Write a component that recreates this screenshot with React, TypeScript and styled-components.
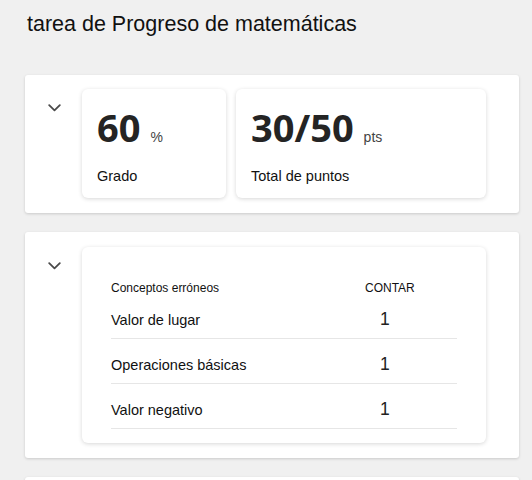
import React from "react";
import styled, { createGlobalStyle } from "styled-components";

const GlobalStyle = createGlobalStyle`
  *, *::before, *::after {
    box-sizing: border-box;
  }
  html, body {
    margin: 0;
    padding: 0;
    background: #f0f0f0;
  }
  body {
    font-family: "Liberation Sans", Arial, sans-serif;
    color: #1b1b1b;
  }
`;

const Page = styled.div`
  padding: 12px 13px 0 25px;
  display: flex;
  flex-direction: column;
`;

const Title = styled.h1`
  margin: 0 0 38px 2px;
  font-size: 21.5px;
  font-weight: 400;
  line-height: normal;
  color: #111;
`;

const Stack = styled.div`
  display: flex;
  flex-direction: column;
  gap: 19px;
`;

const Card = styled.section<{ $pt?: number }>`
  background: #fff;
  border-radius: 3px;
  box-shadow: 0 1px 3px rgba(0, 0, 0, 0.16);
  display: flex;
  align-items: flex-start;
  gap: 16px;
  padding: ${(p) => p.$pt ?? 15}px 33px 15px 17px;
`;

const Toggle = styled.button`
  flex: 0 0 24px;
  width: 24px;
  height: 24px;
  margin-top: 7px;
  padding: 0;
  border: 0;
  background: transparent;
  display: flex;
  align-items: center;
  justify-content: center;
  cursor: pointer;
`;

const Content = styled.div<{ $minH?: number }>`
  flex: 1;
  min-width: 0;
  min-height: ${(p) => p.$minH ?? 0}px;
`;

const StatRow = styled.div`
  display: flex;
  gap: 10px;
`;

const StatCard = styled.div<{ $w?: number }>`
  flex: ${(p) => (p.$w ? `0 0 ${p.$w}px` : "1")};
  background: #fff;
  border-radius: 6px;
  box-shadow: 0 1px 4px rgba(0, 0, 0, 0.16);
  padding: 19px 15px 14px 15px;
  display: flex;
  flex-direction: column;
  gap: 22px;
`;

const ValueLine = styled.div`
  display: flex;
  align-items: baseline;
  gap: 10px;
`;

const BigValue = styled.span`
  font-family: "Open Sans", "Liberation Sans", sans-serif;
  font-weight: 700;
  font-size: 38px;
  line-height: 38px;
  color: #242424;
`;

const Unit = styled.span`
  font-size: 14px;
  color: #444;
`;

const StatLabel = styled.div`
  font-size: 14.5px;
  color: #111;
`;

const TableCard = styled.div`
  background: #fff;
  border-radius: 6px;
  box-shadow: 0 1px 4px rgba(0, 0, 0, 0.16);
  padding: 36px 29px 14px 29px;
`;

const GridRow = styled.div`
  display: grid;
  grid-template-columns: 1fr 92px;
  align-items: baseline;
`;

const HeaderRow = styled(GridRow)`
  font-size: 12px;
  line-height: 11px;
  color: #111;
`;

const DataRow = styled(GridRow)`
  height: 45px;
  border-bottom: 1px solid #e6e6e6;
  align-content: start;
`;

const RowLabel = styled.span`
  font-size: 14.5px;
  padding-top: 18px;
  color: #111;
`;

const RowCount = styled.span`
  font-size: 17.5px;
  padding-left: 15px;
  color: #222;
`;

const Chevron = () => (
  <svg width="13" height="8" viewBox="0 0 13 8" aria-hidden="true">
    <polyline
      points="1.2,1.2 6.5,6.3 11.8,1.2"
      fill="none"
      stroke="#4a4a4a"
      strokeWidth="1.8"
      strokeLinecap="round"
      strokeLinejoin="round"
    />
  </svg>
);

const rows = [
  { label: "Valor de lugar", count: 1 },
  { label: "Operaciones básicas", count: 1 },
  { label: "Valor negativo", count: 1 },
];

export default function App() {
  return (
    <>
      <GlobalStyle />
      <Page>
        <Title>tarea de Progreso de matemáticas</Title>
        <Stack>
          <Card $pt={14}>
            <Toggle aria-label="Contraer">
              <Chevron />
            </Toggle>
            <Content>
              <StatRow>
                <StatCard $w={144}>
                  <ValueLine>
                    <BigValue>60</BigValue>
                    <Unit>%</Unit>
                  </ValueLine>
                  <StatLabel>Grado</StatLabel>
                </StatCard>
                <StatCard>
                  <ValueLine>
                    <BigValue>30/50</BigValue>
                    <Unit>pts</Unit>
                  </ValueLine>
                  <StatLabel>Total de puntos</StatLabel>
                </StatCard>
              </StatRow>
            </Content>
          </Card>

          <Card>
            <Toggle aria-label="Contraer">
              <Chevron />
            </Toggle>
            <Content>
              <TableCard>
                <HeaderRow>
                  <span>Conceptos erróneos</span>
                  <span>CONTAR</span>
                </HeaderRow>
                {rows.map((r) => (
                  <DataRow key={r.label}>
                    <RowLabel>{r.label}</RowLabel>
                    <RowCount>{r.count}</RowCount>
                  </DataRow>
                ))}
              </TableCard>
            </Content>
          </Card>

          <Card>
            <Toggle aria-label="Contraer">
              <Chevron />
            </Toggle>
            <Content $minH={120} />
          </Card>
        </Stack>
      </Page>
    </>
  );
}
